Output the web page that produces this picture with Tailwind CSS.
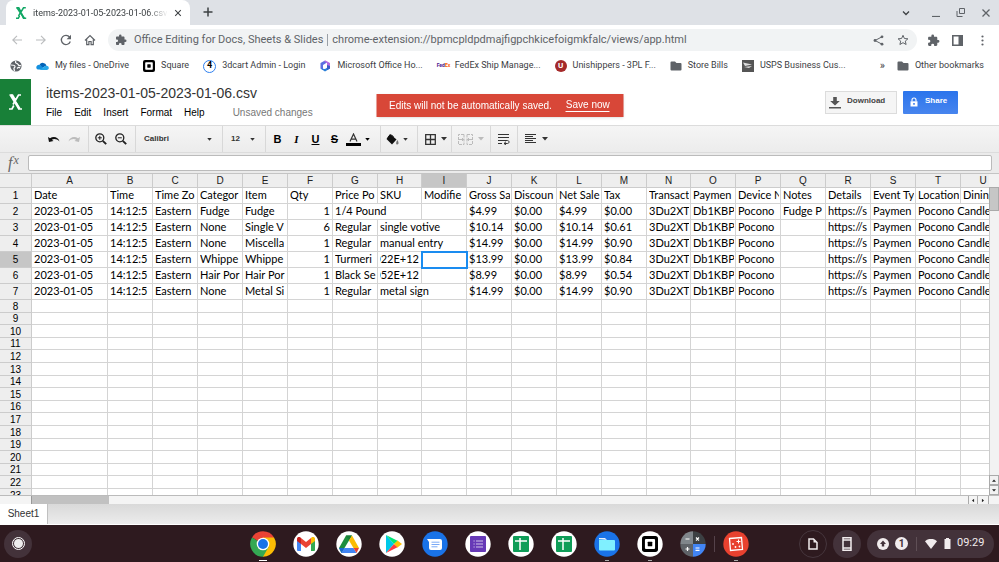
<!DOCTYPE html>
<html lang="en">
<head>
    <meta charset="UTF-8">
    <meta name="viewport" content="width=device-width, initial-scale=1.0">
    <title>items-2023-01-05-2023-01-06.csv</title>
    <script src="https://cdn.jsdelivr.net/npm/@tailwindcss/browser@4"></script>
</head>
<body class="flex h-screen flex-col overflow-hidden bg-white font-['Liberation_Sans',Arial,sans-serif] text-[10px] text-[#222]">

    <!-- Shared icon shapes -->
    <svg class="hidden">
        <symbol id="puzzle" viewBox="0 0 24 24"><path fill="currentColor" d="M20.5 11H19V7c0-1.100-.9-2-2-2h-4V3.500a2.500 2.500 0 0 0-5 0V5H4c-1.100 0-2 .9-2 2v3.800h1.500a2.700 2.700 0 0 1 0 5.400H2V20c0 1.100.9 2 2 2h3.800v-1.500a2.700 2.700 0 0 1 5.400 0V22H17c1.100 0 2-.9 2-2v-4h1.500a2.500 2.500 0 0 0 0-5z"/></symbol>
        <symbol id="folder" viewBox="0 0 24 24"><path fill="currentColor" d="M10 3H3a2 2 0 0 0-2 2v14a2 2 0 0 0 2 2h18a2 2 0 0 0 2-2V8a2 2 0 0 0-2-2h-8z"/></symbol>
        <symbol id="close" viewBox="0 0 10 10"><path d="M1.500 1.500l7 7M8.500 1.500l-7 7" stroke="currentColor" stroke-width="1.300" fill="none"/></symbol>
        <symbol id="caret" viewBox="0 0 6 4"><path d="M0 0h6L3 3.500z" fill="currentColor"/></symbol>
        <symbol id="square" viewBox="0 0 12 12"><rect width="12" height="12" rx="2" fill="#000"/><rect x="2.200" y="2.200" width="7.600" height="7.600" rx=".8" fill="#fff"/><rect x="4.300" y="4.300" width="3.400" height="3.400" rx=".4" fill="#000"/></symbol>
        <symbol id="sheets" viewBox="0 0 26 26"><circle cx="13" cy="13" r="12.700" fill="#fff"/><rect x="5" y="5" width="16" height="16" rx="1" fill="#0f9d58"/><path d="M7 10h12M12 7v12" stroke="#fff" stroke-width="1.500"/></symbol>
    </svg>

    <!-- Tab strip -->
    <header class="flex h-[25px] shrink-0 items-end bg-[#dee1e6] pl-[6px] font-['Roboto',sans-serif] text-[#3c4043]">
        <div class="flex h-[25px] w-[184px] items-center rounded-t-lg bg-white pl-[9px] pr-2">
            <svg class="mr-[6px] size-3 shrink-0" viewBox="0 0 12 12"><path d="M1.300.8h2.500l2 3.700M10.800.8H8.500L3.500 9M1 11.200h2.300l1.300-2.400M6.500 6.500l2 4.700h2.700" fill="none" stroke="#12a765" stroke-width="1.500"/><path d="M2.200.8l7 10.400" stroke="#12a765" stroke-width="2"/></svg>
            <span class="min-w-0 flex-1 overflow-hidden whitespace-nowrap text-[9px] leading-4 mask-r-from-85%">items-2023-01-05-2023-01-06.csv</span>
            <button class="ml-[6px]" aria-label="Close tab"><svg class="size-2"><use href="#close"/></svg></button>
        </div>
        <button class="mb-2 ml-[13px]" aria-label="New tab"><svg class="size-[10px]" viewBox="0 0 10 10"><path d="M5 .5v9M.5 5h9" stroke="#3c4043" stroke-width="1.500"/></svg></button>
        <div class="ml-auto flex h-full items-center gap-4 pr-2">
            <button aria-label="Search tabs"><svg class="mr-[6px] size-2" viewBox="0 0 8 8"><path d="M1 2.500l3 3 3-3" fill="none" stroke="#3c4043" stroke-width="1.300"/></svg></button>
            <button aria-label="Minimize"><svg class="size-2" viewBox="0 0 8 8"><path d="M0 7.500h8" stroke="#5f6368" stroke-width="1.200"/></svg></button>
            <button aria-label="Restore"><svg class="size-[9px]" viewBox="0 0 9 9" fill="none" stroke="#5f6368"><path d="M3.500.5h5v5h-5z"/><path d="M1 3v5.500h5.500"/></svg></button>
            <button aria-label="Close"><svg class="size-[10px] text-[#5f6368]"><use href="#close"/></svg></button>
        </div>
    </header>

    <!-- Address bar -->
    <nav class="flex h-[28px] shrink-0 items-center bg-white pl-3 pr-[14px] pt-[2px] font-['Roboto',sans-serif] text-[#5f6368]">
        <button aria-label="Back"><svg class="size-[10px]" viewBox="0 0 10 10" fill="none" stroke="#babcbe" stroke-width="1.100"><path d="M10 5H1M5 .8L.8 5 5 9.200"/></svg></button>
        <button class="ml-[14px]" aria-label="Forward"><svg class="size-[10px]" viewBox="0 0 10 10" fill="none" stroke="#babcbe" stroke-width="1.100"><path d="M0 5h9M5 .8L9.200 5 5 9.200"/></svg></button>
        <button class="ml-[14px]" aria-label="Reload"><svg class="size-3" viewBox="0 0 12 12"><path d="M10.300 7.500A4.600 4.600 0 1 1 9.600 3.100" fill="none" stroke="currentColor" stroke-width="1.300"/><path d="M11 .8v4.400H6.600z" fill="currentColor"/></svg></button>
        <button class="ml-3" aria-label="Home"><svg class="size-3" viewBox="0 0 12 12"><path d="M1 6.500L6 1.500l5 5M2.700 5.500v5.200h2.200V7.500h2.200v3.200h2.200V5.500" fill="none" stroke="currentColor" stroke-width="1.200"/></svg></button>
        <div class="ml-3 flex h-[22px] min-w-0 flex-1 items-center rounded-full bg-[#f1f3f4] pl-[7px] pr-2 text-[11px] whitespace-nowrap">
            <svg class="mr-[7px] size-3 shrink-0"><use href="#puzzle"/></svg>
            <span>Office Editing for Docs, Sheets &amp; Slides</span>
            <span class="mx-1 h-3 w-px bg-[#9aa0a6]"></span>
            <input class="min-w-0 flex-1 bg-transparent outline-none" aria-label="Address" value="chrome-extension://bpmcpldpdmajfigpchkicefoigmkfalc/views/app.html">
            <button aria-label="Share"><svg class="size-[11px]" viewBox="0 0 11 11" fill="currentColor"><circle cx="9" cy="1.800" r="1.400"/><circle cx="2" cy="5.500" r="1.400"/><circle cx="9" cy="9.200" r="1.400"/><path d="M9 1.800L2 5.500l7 3.700" fill="none" stroke="currentColor"/></svg></button>
            <button class="ml-[13px]" aria-label="Bookmark"><svg class="size-3" viewBox="0 0 12 12"><path d="M6 1.300l1.400 3.200 3.500.3-2.600 2.300.8 3.400L6 8.700l-3.100 1.800.8-3.400L1.100 4.800l3.500-.3z" fill="none" stroke="currentColor"/></svg></button>
        </div>
        <button class="ml-[10px]" aria-label="Extensions"><svg class="size-[13px]"><use href="#puzzle"/></svg></button>
        <button class="ml-3" aria-label="Side panel"><svg class="size-[11px]" viewBox="0 0 11 11"><path d="M.8.800h9.400v9.400H.8z" fill="none" stroke="currentColor" stroke-width="1.600"/><path d="M6.500 1h4v9h-4z" fill="currentColor"/></svg></button>
        <button class="ml-[17px]" aria-label="Menu"><svg class="h-[11px] w-[5px]" viewBox="0 0 5 11" fill="currentColor"><circle cx="2.500" cy="1.500" r="1.100"/><circle cx="2.500" cy="5.500" r="1.100"/><circle cx="2.500" cy="9.500" r="1.100"/></svg></button>
    </nav>

    <!-- Bookmarks bar -->
    <nav class="flex h-[26px] shrink-0 items-center gap-[14px] bg-white pl-[10px] pr-[15px] font-['Roboto',sans-serif] text-[9px] whitespace-nowrap text-[#3c4043]">
        <a href="#" aria-label="Web"><svg class="size-3" viewBox="0 0 12 12"><circle cx="6" cy="6" r="5.600" fill="#5f6368"/><path d="M1 5c2 0 4 0 4 1.500S3.500 7.500 4 9l.5 2M6 .8C5 2 5.500 3 7 3.500S8 6 10 5.500l1 .5M7 8.500c1-1 2.500-1 3-.5" fill="none" stroke="#fff" stroke-width="1.200"/></svg></a>
        <a href="#" class="flex items-center gap-[6px]"><svg class="h-3 w-[13px]" viewBox="0 0 13 12"><path d="M3.500 4.500a4 4 0 0 1 7 1L6 8z" fill="#0364b8"/><path d="M.3 8a2.700 2.700 0 0 1 4-2.800L9 9.500H2.500A2.200 2.200 0 0 1 .3 8z" fill="#1490df"/><path d="M3.500 10l6-4.200c2.500-.3 3.500 1.200 3.300 2.500-.2 1.200-1.200 1.700-2 1.700z" fill="#28a8ea"/></svg>My files - OneDrive</a>
        <a href="#" class="flex items-center gap-[6px]"><svg class="size-3"><use href="#square"/></svg>Square</a>
        <a href="#" class="flex items-center gap-[6px]"><span class="flex size-[13px] items-center justify-center rounded-full border border-[#2d7ff0] text-[9px] font-bold text-black">4</span>3dcart Admin - Login</a>
        <a href="#" class="flex items-center gap-[6px]"><svg class="size-3" viewBox="0 0 12 12"><path d="M6 .5L1.500 3v5.500L4 10V5l4-2.500z" fill="#5b6fe0"/><path d="M6.500.5L11 3v4L8 5.500V3L5 1.500z" fill="#b56be0"/><path d="M1.500 8.500l4.500 3 5-3V6L6 9z" fill="#2a7fd8"/><path d="M8 5l3 1v2.500L8 10z" fill="#3a5bc8"/></svg>Microsoft Office Ho...</a>
        <a href="#" class="flex items-center gap-[6px]"><span class="w-3 text-[5px] font-bold text-[#4d148c]">Fed<span class="text-[#ff6200]">Ex</span></span>FedEx Ship Manage...</a>
        <a href="#" class="flex items-center gap-[6px]"><span class="flex size-3 items-center justify-center rounded-full bg-[#a52a2a] text-[8px] font-bold text-white">U</span>Unishippers - 3PL F...</a>
        <a href="#" class="flex items-center gap-[6px]"><svg class="size-3 text-[#5f6368]"><use href="#folder"/></svg>Store Bills</a>
        <a href="#" class="flex items-center gap-[6px]"><svg class="size-3" viewBox="0 0 12 12"><rect width="12" height="12" fill="#555"/><path d="M1 2.500l9 2-7 1.500zM2 7l8-1-3 2zM1 10l8-2" fill="#ddd"/></svg>USPS Business Cus...</a>
        <a href="#" class="ml-auto flex items-center gap-[6px]"><span class="mr-[6px] text-[11px]">»</span><svg class="size-3 text-[#5f6368]"><use href="#folder"/></svg>Other bookmarks</a>
    </nav>

    <!-- Document header -->
    <div class="flex h-[46px] shrink-0 bg-white">
        <div class="flex w-[31px] items-center justify-center bg-[#188038]">
            <svg class="h-4 w-[15px]" viewBox="0 0 15 16"><path d="M1.500 1h3l2.500 4.500M13 1h-2.500L5 10.500M1 15h3l1.800-3.500M8 8.500l3 6.500H14" fill="none" stroke="#fff" stroke-width="1.700"/><path d="M2.800 1l8.700 14" stroke="#fff" stroke-width="2.600"/></svg>
        </div>
        <div class="pl-[15px] pt-[5px]">
            <h1 class="text-[14px] leading-[18px] text-[#333]">items-2023-01-05-2023-01-06.csv</h1>
            <div class="mt-[3px] flex gap-3 leading-4 text-black">
                <button>File</button>
                <button>Edit</button>
                <button>Insert</button>
                <button>Format</button>
                <button>Help</button>
                <span class="ml-4 text-[#777]">Unsaved changes</span>
            </div>
        </div>
        <div class="ml-auto flex gap-[6px] pr-[41px] pt-3 text-[8px] font-bold">
            <button class="flex h-[23px] w-[72px] items-center gap-[6px] border border-[#dcdcdc] bg-[#f5f5f5] pb-1 pl-[3px] text-[#444]"><svg class="mt-1 h-3 w-[12px]" viewBox="0 0 12 12" fill="#555"><path d="M4.200 0h3.600v4h3L6 8.500 1.200 4h3zM0 10h12v1.500H0z"/></svg>Download</button>
            <button class="flex h-[23px] w-[55px] items-center gap-[7px] rounded-[1px] bg-linear-to-b from-[#2a74ec] to-[#4785ee] pb-1 pl-[7px] text-white"><svg class="mt-[2px] h-[10px] w-2" viewBox="0 0 8 10"><path d="M2 4.500V3a2 2 0 0 1 4 0v1.500" fill="none" stroke="#fff" stroke-width="1.100"/><path d="M.5 4.300h7v5.200h-7z" fill="#fff"/><path d="M3.200 6h1.600v1.800H3.200z" fill="#3b7ded"/></svg>Share</button>
        </div>
    </div>
    <div class="fixed left-1/2 top-[94px] flex h-[23px] w-[247px] -translate-x-1/2 items-center gap-[14px] bg-[#d84738] pl-[13px] whitespace-nowrap text-white shadow-sm">
        Edits will not be automatically saved.
        <button class="border-b border-white leading-3">Save now</button>
    </div>

    <!-- Formatting toolbar -->
    <div class="flex h-[28px] shrink-0 items-stretch border-y border-[#dcdcdc] bg-linear-to-b from-[#f5f5f5] to-[#ececec] text-[8px] font-bold text-[#333] *:flex *:items-center *:border-r *:border-[#d8d8d8]">
        <div class="w-[89px] gap-2 pl-12">
            <button aria-label="Undo"><svg class="h-2 w-3" viewBox="0 0 12 8"><path d="M0 2l1 5 4.500-1-1.600-1.200C6 3.500 9 4 11.500 6.500 10.500 2 5.500.8 2 3.200z" fill="#111"/></svg></button>
            <button aria-label="Redo"><svg class="h-2 w-3" viewBox="0 0 12 8"><path d="M12 2l-1 5-4.500-1 1.600-1.200C6 3.500 3 4 .5 6.500 1.500 2 6.500.8 10 3.200z" fill="#bbb"/></svg></button>
        </div>
        <div class="w-[47px] gap-2 pl-[6px]">
            <button aria-label="Zoom in"><svg class="size-3" viewBox="0 0 12 12" fill="none" stroke="#222"><circle cx="4.800" cy="4.800" r="4" stroke-width="1.300"/><path d="M7.800 7.800l3.400 3.400" stroke-width="1.900"/><path d="M4.800 2.800v4M2.800 4.800h4"/></svg></button>
            <button aria-label="Zoom out"><svg class="size-3" viewBox="0 0 12 12" fill="none" stroke="#222"><circle cx="4.800" cy="4.800" r="4" stroke-width="1.300"/><path d="M7.800 7.800l3.400 3.400" stroke-width="1.900"/><path d="M2.800 4.800h4"/></svg></button>
        </div>
        <div class="w-[87px]"><button class="flex w-full items-center justify-between pl-2 pr-[10px]">Calibri<svg class="h-[3px] w-[5px]"><use href="#caret"/></svg></button></div>
        <div class="w-[43px]"><button class="flex w-full items-center justify-between pl-2 pr-[10px]">12<svg class="h-[3px] w-[5px]"><use href="#caret"/></svg></button></div>
        <div class="w-[115px] pl-[2px] text-[11px] text-black *:w-[19px] *:text-center">
            <button class="font-black">B</button>
            <button class="font-['Liberation_Serif',serif] italic">I</button>
            <button class="underline">U</button>
            <button class="line-through">S</button>
            <button class="flex items-center gap-1" aria-label="Text color"><svg class="ml-[2px] h-[13px] w-[15px] shrink-0" viewBox="0 0 15 13"><path d="M4 8.500L7.500 1 11 8.500M5 6.200h5" fill="none" stroke="#333" stroke-width="1.200"/><path d="M0 10h15v3H0z" fill="#000"/></svg><svg class="h-[3px] w-[5px] shrink-0"><use href="#caret"/></svg></button>
        </div>
        <div class="w-[37px] pl-[5px]"><button class="flex items-center gap-1" aria-label="Fill color"><svg class="size-[13px]" viewBox="0 0 13 13"><path d="M4 1l6.500 5.500-4.500 5L.5 6z" fill="#111"/><path d="M2 5.500c0-4 5-4.500 5.500-1" fill="none" stroke="#111"/><path d="M11.300 7c1.800 2.500 1.500 4.500 0 4.500S9.700 9.500 11.300 7z" fill="#777"/></svg><svg class="h-[3px] w-[5px]"><use href="#caret"/></svg></button></div>
        <div class="w-[34px] pl-[7px]"><button class="flex items-center gap-[5px]" aria-label="Borders"><svg class="size-[11px]" viewBox="0 0 11 11"><path d="M.7.700h9.600v9.600H.7zM5.500.5v10M.5 5.500h10" fill="none" stroke="#333" stroke-width="1.300"/></svg><svg class="h-1 w-[6px]"><use href="#caret"/></svg></button></div>
        <div class="w-[39px] pl-[6px] text-[#bbb]"><button class="flex items-center gap-[5px]" aria-label="Merge cells" disabled><svg class="h-[11px] w-[15px]" viewBox="0 0 15 11" fill="none" stroke="currentColor"><path d="M6 .5H.5v10H6zM9 .5h5.500v10H9z" stroke-dasharray="3 1"/><path d="M1 5.500h4.500M14 5.500H9.500M4 4l1.500 1.500L4 7M11 4L9.500 5.500 11 7"/></svg><svg class="h-1 w-[6px]"><use href="#caret"/></svg></button></div>
        <div class="w-[27px] pl-[7px]"><button aria-label="Wrap text"><svg class="size-3" viewBox="0 0 12 12" fill="none" stroke="#333"><path d="M0 1.500h11M0 4.500h11M0 7.500h9.500c2 0 2 3 0 3H6M0 10.500h4M8 8.700l-2 1.800 2 1.500"/></svg></button></div>
        <div class="border-none pl-[7px]"><button class="flex items-center gap-[6px]" aria-label="Align"><svg class="h-[10px] w-[11px]" viewBox="0 0 11 10" stroke="#333"><path d="M0 .5h11M0 2.500h8M0 4.500h11M0 6.500h8M0 8.500h11"/></svg><svg class="h-1 w-[6px]"><use href="#caret"/></svg></button></div>
    </div>

    <!-- Formula bar -->
    <div class="flex h-[21px] shrink-0 items-center border-b border-[#c4c4c4] bg-[#ebebeb] pr-[7px]">
        <label for="formula" class="flex w-7 gap-px pl-2 font-['Liberation_Serif',serif] text-[16px] leading-4 italic text-[#666]">f<span class="text-[12px] leading-[10px]">x</span></label>
        <input id="formula" class="h-4 min-w-0 flex-1 rounded-xs border border-[#bbb] bg-white px-1">
    </div>

    <!-- Spreadsheet -->
    <main class="flex min-h-0 flex-1 bg-[#eee]">
        <div class="min-w-0 flex-1 overflow-hidden bg-white">
            <table id="sheet" class="w-px table-fixed border-separate border-spacing-0"></table>
        </div>
        <div class="flex w-[10px] flex-col bg-[#f2f2f2] pt-[13px]">
            <div class="h-6 border border-[#aaa] bg-[#c6c6c6]"></div>
            <div class="flex-1 border-l border-[#ccc]"></div>
            <button class="flex h-[10px] items-center justify-center border border-[#aaa]" aria-label="Scroll up"><svg class="h-[3px] w-1 rotate-180"><use href="#caret"/></svg></button>
            <button class="flex h-[10px] items-center justify-center border border-[#aaa]" aria-label="Scroll down"><svg class="h-[3px] w-1"><use href="#caret"/></svg></button>
        </div>
    </main>
    <div class="flex h-[9px] shrink-0 border-t border-[#bbb] bg-[#f4f4f4] pl-[31px] pr-[10px]">
        <div class="w-[78px] border-l border-[#999] bg-[#c1c1c1]"></div>
        <button class="ml-auto flex w-[10px] items-center justify-center border-x border-[#aaa]" aria-label="Scroll left"><svg class="h-[3px] w-1 rotate-90"><use href="#caret"/></svg></button>
        <button class="flex w-[11px] items-center justify-center border-r border-[#aaa]" aria-label="Scroll right"><svg class="h-[3px] w-1 -rotate-90"><use href="#caret"/></svg></button>
    </div>
    <div class="flex h-[21px] shrink-0 border-b border-white bg-linear-to-b from-[#d9d9d9] to-[#ececec]">
        <button class="w-12 border-r border-[#c0c0c0] bg-white pb-[2px] text-[#333]">Sheet1</button>
    </div>

    <!-- Shelf -->
    <footer class="grid h-[37px] shrink-0 grid-cols-[1fr_auto_1fr] items-center bg-[#2e1a1f] font-['Roboto',sans-serif] text-[#f1eced]">
        <button class="ml-1 flex size-7 items-center justify-center rounded-full bg-[#43323a]" aria-label="Launcher"><span class="size-[13px] rounded-full border border-white p-px"><span class="block size-full rounded-full bg-[#eee]"></span></span></button>
        <div class="flex items-center gap-[17px] *:relative [&_svg]:size-[26px]">
            <button aria-label="Chrome"><svg viewBox="0 0 26 26"><path d="M13 13L2 6.500a12.700 12.700 0 0 1 22 0z" fill="#ea4335"/><path d="M13 13V6.500h11A12.700 12.700 0 0 1 13 25.700z" fill="#fbbc04"/><path d="M13 13l5.500 3.200-5.500 9.500A12.700 12.700 0 0 1 2 6.500z" fill="#34a853"/><circle cx="13" cy="13" r="6.300" fill="#fff"/><circle cx="13" cy="13" r="5" fill="#1a73e8"/></svg><span class="absolute -bottom-1 left-1/2 h-px w-2 -translate-x-1/2 bg-white"></span></button>
            <button aria-label="Gmail"><svg viewBox="0 0 26 26"><circle cx="13" cy="13" r="12.700" fill="#fff"/><path d="M4 9l4 3v8H5a1 1 0 0 1-1-1z" fill="#4285f4"/><path d="M22 9l-4 3v8h3a1 1 0 0 0 1-1z" fill="#34a853"/><path d="M4 10V8c0-2 2-2.500 3.500-1.500L8 7v6z" fill="#c5221f"/><path d="M22 10V8c0-2-2-2.500-3.500-1.500L18 7v6z" fill="#fbbc04"/><path d="M8 7l5 4 5-4v6l-5 4-5-4z" fill="#ea4335"/></svg></button>
            <button aria-label="Drive"><svg viewBox="0 0 26 26"><circle cx="13" cy="13" r="12.700" fill="#fff"/><path d="M10 4.500h6L8.500 17l-3 5L3 17z" fill="#1e8e3e"/><path d="M10 4.500h6l-3 5z" fill="#188038"/><path d="M16 4.500L23 17h-5.500L13 9.500z" fill="#fbbc04"/><path d="M8.500 17h9l3 5h-15z" fill="#4285f4"/><path d="M17.500 17H23l-2.500 5z" fill="#ea4335"/><path d="M8.500 17H3l2.500 5z" fill="#1967d2"/></svg></button>
            <button aria-label="Play Store"><svg viewBox="0 0 26 26"><circle cx="13" cy="13" r="12.700" fill="#fff"/><path d="M7 4v18l8-9z" fill="#00c8e8"/><path d="M7 4l12 6-4 3z" fill="#00e676"/><path d="M7 22l12-6-4-3z" fill="#ff3a44"/><path d="M15 13l3.500-3.500L23 13l-4.500 3.500z" fill="#ffc107"/></svg></button>
            <button aria-label="Messages"><svg viewBox="0 0 26 26"><circle cx="13" cy="13" r="12.700" fill="#1a73e8"/><path d="M5 8h13a2 2 0 0 1 2 2v7a2 2 0 0 1-2 2H9a2 2 0 0 1-2-2v-6z" fill="#fff"/><path d="M9.500 11.200h8M9.500 13.500h8M9.500 15.800h6" stroke="#7baaf7"/></svg></button>
            <button aria-label="Forms"><svg viewBox="0 0 26 26"><circle cx="13" cy="13" r="12.700" fill="#fff"/><rect x="5" y="5" width="16" height="16" rx="1" fill="#673ab7"/><path d="M8.500 10h1.200M8.500 13h1.200M8.500 16h1.200M11 10h7M11 13h7M11 16h7" stroke="#d1c4e9" stroke-width="1.200"/></svg></button>
            <button aria-label="Sheets"><svg><use href="#sheets"/></svg></button>
            <button aria-label="Sheets"><svg><use href="#sheets"/></svg></button>
            <button aria-label="Files"><svg viewBox="0 0 26 26"><circle cx="13" cy="13" r="12.700" fill="#1a73e8"/><path d="M5 8V7h6l2 2z" fill="#e8f0fe"/><path d="M5 8.500l7 .5h8a1 1 0 0 1 1 1v8.500a1 1 0 0 1-1 1H6a1 1 0 0 1-1-1z" fill="#80f0ff"/></svg><span class="absolute -bottom-1 left-1/2 h-px w-1 -translate-x-1/2 bg-[#aaa]"></span></button>
            <button aria-label="Square"><svg viewBox="0 0 26 26"><circle cx="13" cy="13" r="12.700" fill="#fff"/><use href="#square" x="5" y="5" width="16" height="16"/></svg><span class="absolute -bottom-1 left-1/2 h-px w-1 -translate-x-1/2 bg-[#aaa]"></span></button>
            <button aria-label="Calculator"><svg viewBox="0 0 26 26"><path d="M13 13H.3A12.700 12.700 0 0 1 13 .3z" fill="#80868b"/><path d="M13 13V.3A12.700 12.700 0 0 1 25.700 13z" fill="#3c4043"/><path d="M13 13v12.700A12.700 12.700 0 0 1 .3 13z" fill="#5f6368"/><path d="M13 13h12.700A12.700 12.700 0 0 1 13 25.700z" fill="#4285f4"/><path d="M5.500 8h4M16 6.500l3 3M19 6.500l-3 3M5.500 18h4M7.500 16v4M15.500 17h4M15.500 19.300h4" stroke="#fff" stroke-width="1.200"/></svg></button>
            <span class="-mx-[9px] h-4 w-px bg-[#55424a]"></span>
            <button aria-label="Casting game"><svg viewBox="0 0 26 26"><circle cx="13" cy="13" r="12.700" fill="#e8412f"/><path d="M6.500 7.500l12-1 1 12-12 1z" fill="none" stroke="#fff" stroke-width="1.300"/><path d="M15.500 8.500v4M13.500 10.500h4" stroke="#fff"/><circle cx="10" cy="13" r=".9" fill="#fff"/><circle cx="12.500" cy="16" r=".9" fill="#fff"/><circle cx="16.500" cy="15.500" r=".9" fill="#fff"/></svg><span class="absolute -bottom-1 left-1/2 h-px w-1 -translate-x-1/2 bg-[#aaa]"></span></button>
        </div>
        <div class="flex items-center justify-end gap-[6px] pr-[5px]">
            <button class="flex size-7 items-center justify-center rounded-full border border-[#46363d]" aria-label="Holding space"><svg class="h-3 w-[10px]" viewBox="0 0 10 12"><path d="M1 1h4.500L9 4.500V11H1z" fill="none" stroke="#f1eced" stroke-width="1.500"/><path d="M5.500 1v3.500H9" fill="#f1eced"/></svg></button>
            <button class="flex size-7 items-center justify-center rounded-full bg-[#43323a]" aria-label="Phone hub"><svg class="h-[14px] w-[10px]" viewBox="0 0 10 14"><path d="M1 .8h8v12.400H1z" fill="none" stroke="#f1eced" stroke-width="1.500"/><path d="M1 3h8M1 11h8" stroke="#f1eced" stroke-width="1.500"/></svg></button>
            <button class="flex h-7 w-[127px] items-center rounded-full bg-[#43323a] pl-[10px] text-[11px]">
                <svg class="size-3" viewBox="0 0 12 12"><circle cx="6" cy="6" r="6" fill="#f1eced"/><path d="M6 2.500L9 6H7.200v2.500H4.800V6H3z" fill="#43323a"/></svg>
                <span class="ml-[6px] flex size-[13px] items-center justify-center rounded-full bg-[#f1eced] text-[10px] font-bold text-[#43323a]">1</span>
                <span class="mx-2 h-[14px] w-px bg-[#5f4f56]"></span>
                <svg class="h-[10px] w-3" viewBox="0 0 12 10"><path d="M0 2.300a8.500 8.500 0 0 1 12 0L6 10z" fill="#f1eced"/></svg>
                <svg class="ml-[7px] h-[11px] w-[7px]" viewBox="0 0 7 11"><path d="M2 0h3v1h1.500v10h-6V1H2z" fill="#f1eced"/></svg>
                <span class="ml-[6px]">09:29</span>
            </button>
        </div>
    </footer>

    <script>
        const letters = 'ABCDEFGHIJKLMNOPQRSTU'.split('');
        const widths = [76, 45, 45, 45, 45, 45, 45, 44, 45, 45, 45, 45, 45, 44, 45, 45, 45, 45, 45, 45, 45];

        const rows = [
            ['Date', 'Time', 'Time Zo', 'Categor', 'Item', 'Qty', 'Price Po', 'SKU', 'Modifie', 'Gross Sa', 'Discoun', 'Net Sale', 'Tax', 'Transact', 'Paymen', 'Device N', 'Notes', 'Details', 'Event Ty', 'Location', 'Dining'],
            ['Fudge', 'Fudge', '1', '1/4 Pound', '', '$4.99', '$0.00', 'Fudge P'],
            ['None', 'Single V', '6', 'Regular', 'single votive', '$10.14', '$0.61', ''],
            ['None', 'Miscella', '1', 'Regular', 'manual entry', '$14.99', '$0.90', ''],
            ['Whippe', 'Whippe', '1', 'Turmeri', '022E+12', '$13.99', '$0.84', ''],
            ['Hair Por', 'Hair Por', '1', 'Black Se', '052E+12', '$8.99', '$0.54', ''],
            ['None', 'Metal Si', '1', 'Regular', 'metal sign', '$14.99', '$0.90', '']
        ].map((r, i) => i === 0 ? r : [
            '2023-01-05', '14:12:5', 'Eastern', r[0], r[1], r[2], r[3], r[4], '', r[5], '$0.00', r[5], r[6],
            '3Du2XT', 'Db1KBP', 'Pocono', r[7], 'https://s', 'Paymen', 'Pocono Candle', ''
        ]);

        // Text cells that run over into the empty cell on their right
        const spills = (r, c) => (r === 1 && c === 6) || ([2, 3, 6].includes(r) && c === 7) || (r > 0 && c === 19);

        function cell(text, r, c) {
            if (r === 4 && c === 8) return '<td class="p-0 outline-2 -outline-offset-1 outline-[#1a8cf0]"></td>';
            const border = spills(r, c) ? 'border-b' : 'border-b border-r';
            const right = r > 0 && (c === 5 || text.includes('E+'));
            const clip = spills(r, c) ? 'overflow-visible' : 'overflow-hidden';
            return `<td class="${border} border-[#d4d4d4] p-0 align-top"><div class="ml-[2px] flex ${clip} ${right ? 'mr-[2px] justify-end' : 'mr-px'}"><span class="leading-[14px]">${text}</span></div></td>`;
        }

        let html = '<colgroup><col style="width:32px">' + widths.map(w => `<col style="width:${w}px">`).join('') + '</colgroup>';
        html += '<thead><tr class="h-[14px]"><th class="border-r border-b border-[#ccc] bg-[#eee] p-0"></th>' +
            letters.map(l => `<th class="border-r border-b border-[#ccc] p-0 font-normal leading-3 ${l === 'I' ? 'bg-[#c6c6c6]' : 'bg-[#eee]'}">${l}</th>`).join('') +
            '</tr></thead><tbody>';
        for (let r = 0; r < 23; r++) {
            const filled = r < rows.length;
            const height = filled ? 'h-4' : ([1, 3].includes((r - 7) % 5) ? 'h-3' : 'h-[13px]');
            const head = `<th class="border-r border-b border-[#ccc] p-0 font-normal leading-[11px] ${r === 4 ? 'bg-[#c6c6c6]' : 'bg-[#eee]'}">${r + 1}</th>`;
            const cells = letters.map((l, c) => filled ? cell(rows[r][c], r, c) : '<td class="border-r border-b border-[#d4d4d4] p-0"></td>').join('');
            html += `<tr class="${height} font-['Lato',sans-serif] text-[11px] whitespace-nowrap text-black [&>th]:font-['Liberation_Sans',sans-serif] [&>th]:text-[10px]">${head}${cells}</tr>`;
        }
        document.getElementById('sheet').innerHTML = html + '</tbody>';
    </script>
</body>
</html>
